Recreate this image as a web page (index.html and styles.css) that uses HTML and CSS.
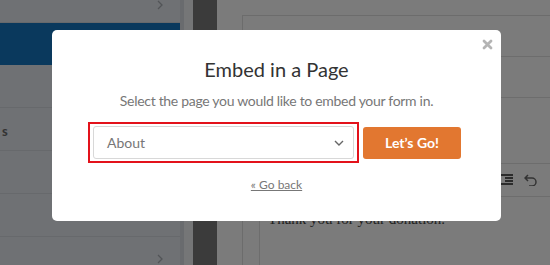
FILE: index.html
```html
<!DOCTYPE html>
<html lang="en">

<head>
    <meta charset="UTF-8">
    <meta name="viewport" content="width=device-width, initial-scale=1.0">
    <title>Embed in a Page</title>
    <link rel="stylesheet" href="styles.css">
</head>

<body>

    <div class="builder">
        <aside class="sidebar">
            <div class="side-row side-top">
                <svg class="side-chev" width="6" height="10" viewBox="0 0 6 10">
                    <path d="M1 1l4 4-4 4" stroke="#a4a8ae" stroke-width="1.3" fill="none" />
                </svg>
            </div>
            <div class="side-row side-active"></div>
            <div class="side-row"></div>
            <div class="side-row"><span class="side-label">s</span></div>
            <div class="side-row"></div>
            <div class="side-row"></div>
            <div class="side-row side-last">
                <svg class="side-chev" width="6" height="10" viewBox="0 0 6 10">
                    <path d="M1 1l4 4-4 4" stroke="#a4a8ae" stroke-width="1.3" fill="none" />
                </svg>
            </div>
        </aside>
        <div class="gutter"></div>
        <div class="divider"></div>

        <main class="editor">
            <div class="editor-panel">
                <div class="field-row field-first"></div>
                <div class="field-row"></div>
                <div class="field-row field-tall"></div>
                <div class="toolbar">
                    <span class="tool-icon">
                        <svg width="14" height="12" viewBox="0 0 14 12">
                            <path d="M1 1h12M5 4h8M5 7h8M1 10h12" stroke="#222" stroke-width="1.6" fill="none" />
                        </svg>
                    </span>
                    <span class="tool-icon">
                        <svg width="14" height="12" viewBox="0 0 14 12">
                            <path d="M4 1L1 4l3 3M1 4h7a4 4 0 0 1 0 8H5" stroke="#666" stroke-width="1.5" fill="none" />
                        </svg>
                    </span>
                </div>
                <div class="content">
                    <p class="content-text">Thank you for your donation.</p>
                </div>
            </div>
        </main>
    </div>

    <!-- embed popup -->
    <div class="overlay">
        <div class="modal">
            <span class="modal-close">
                <svg width="11" height="11" viewBox="0 0 11 11">
                    <path d="M2 2l7 7M9 2l-7 7" stroke="#b4b4b4" stroke-width="2.8" stroke-linecap="round" />
                </svg>
            </span>
            <h2 class="modal-title">Embed in a Page</h2>
            <p class="modal-text">Select the page you would like to embed your form in.</p>
            <div class="modal-row">
                <div class="select-wrap">
                    <div class="page-select">
                        <span>About</span>
                        <svg width="10" height="6" viewBox="0 0 10 6">
                            <path d="M1 1l4 4 4-4" stroke="#666" stroke-width="1.4" fill="none" />
                        </svg>
                    </div>
                </div>
                <button class="go-btn">Let&rsquo;s Go!</button>
            </div>
            <a class="go-back" href="#">&laquo; Go back</a>
        </div>
    </div>

</body>

</html>
```

FILE: styles.css
```css
body {
    margin: 0;
    font-family: 'Lato', 'Open Sans', sans-serif;
    overflow: hidden;
}

.builder {
    display: flex;
    height: 265px;
    overflow: hidden;
    background-color: #f6f6f6;
}

/* left field list */
.sidebar {
    width: 180px;
    background-color: #dee2e8;
    display: flex;
    flex-direction: column;
}

.side-row {
    height: 42px;
    border-bottom: 1px solid #cfd3d8;
    display: flex;
    flex-direction: column;
    flex-shrink: 0;
}

.side-top {
    height: 22px;
}

.side-active {
    background-color: #1573bb;
    border-bottom: none;
    height: 42px;
}

.side-last {
    flex: 1;
    border-bottom: none;
    justify-content: flex-end;
}

.side-chev {
    align-self: flex-end;
    margin-right: 17px;
}

.side-top .side-chev {
    margin-top: 0;
}

.side-last .side-chev {
    margin-bottom: 1px;
}

.side-label {
    display: block;
    padding: 15px 0 0 2px;
    font-size: 13px;
    font-weight: bold;
    color: #666;
}

.gutter {
    width: 13px;
    box-sizing: border-box;
    border-left: 4px solid #d2d6dc;
    background-color: #eaecef;
}

.divider {
    width: 24px;
    background-color: #767676;
}

/* right preview */
.editor {
    flex: 1;
    padding: 15px 0 0 25px;
}

.editor-panel {
    height: 100%;
    border-left: 1px solid #d8d8d8;
    border-top: 1px solid #d8d8d8;
}

.field-row {
    height: 40px;
    border-bottom: 1px solid #dadada;
}

.field-tall {
    height: 65px;
}

.toolbar {
    height: 32px;
    border-bottom: 1px solid #dadada;
    display: flex;
    justify-content: flex-end;
    align-items: center;
    gap: 10px;
    padding-right: 12px;
}

.tool-icon {
    display: flex;
}

.content {
    border-left: 1px solid #dadada;
    margin-left: 16px;
    height: 100px;
    padding-left: 8px;
}

.content-text {
    margin: 0;
    padding-top: 14px;
    font-family: 'Liberation Serif', serif;
    font-size: 15px;
    color: #444;
}

/* popup */
.overlay {
    position: fixed;
    inset: 0;
    background: rgba(0, 0, 0, 0.5);
    padding: 30px 0 0 52px;
}

.modal {
    position: relative;
    box-sizing: border-box;
    width: 449px;
    height: 191px;
    background-color: #fff;
    border-radius: 5px;
    padding-top: 27px;
    text-align: center;
}

.modal-close {
    position: absolute;
    top: 9px;
    right: 8px;
    display: flex;
}

.modal-title {
    margin: 0;
    font-size: 20px;
    line-height: 24px;
    font-weight: normal;
    color: #333;
}

.modal-text {
    margin: 10px 0 0;
    font-size: 14px;
    line-height: 20px;
    letter-spacing: -0.3px;
    color: #777;
}

.modal-row {
    display: flex;
    justify-content: center;
    align-items: center;
    gap: 4px;
    margin-top: 11px;
    padding-right: 4px;
}

.select-wrap {
    border: 2px solid #e3121b;
    padding: 2px 3px;
    width: 261px;
}

.page-select {
    display: flex;
    justify-content: space-between;
    align-items: center;
    height: 31px;
    border: 1px solid #d8d8d8;
    border-radius: 3px;
    padding: 0 9px 0 13px;
    font-size: 14px;
    color: #777;
}

.go-btn {
    width: 98px;
    height: 32px;
    border: none;
    border-radius: 3px;
    background-color: #e27730;
    color: #fff;
    font-family: inherit;
    font-size: 14px;
    font-weight: bold;
}

.go-back {
    display: inline-block;
    margin-top: 14px;
    font-size: 12px;
    color: #777;
}
```
